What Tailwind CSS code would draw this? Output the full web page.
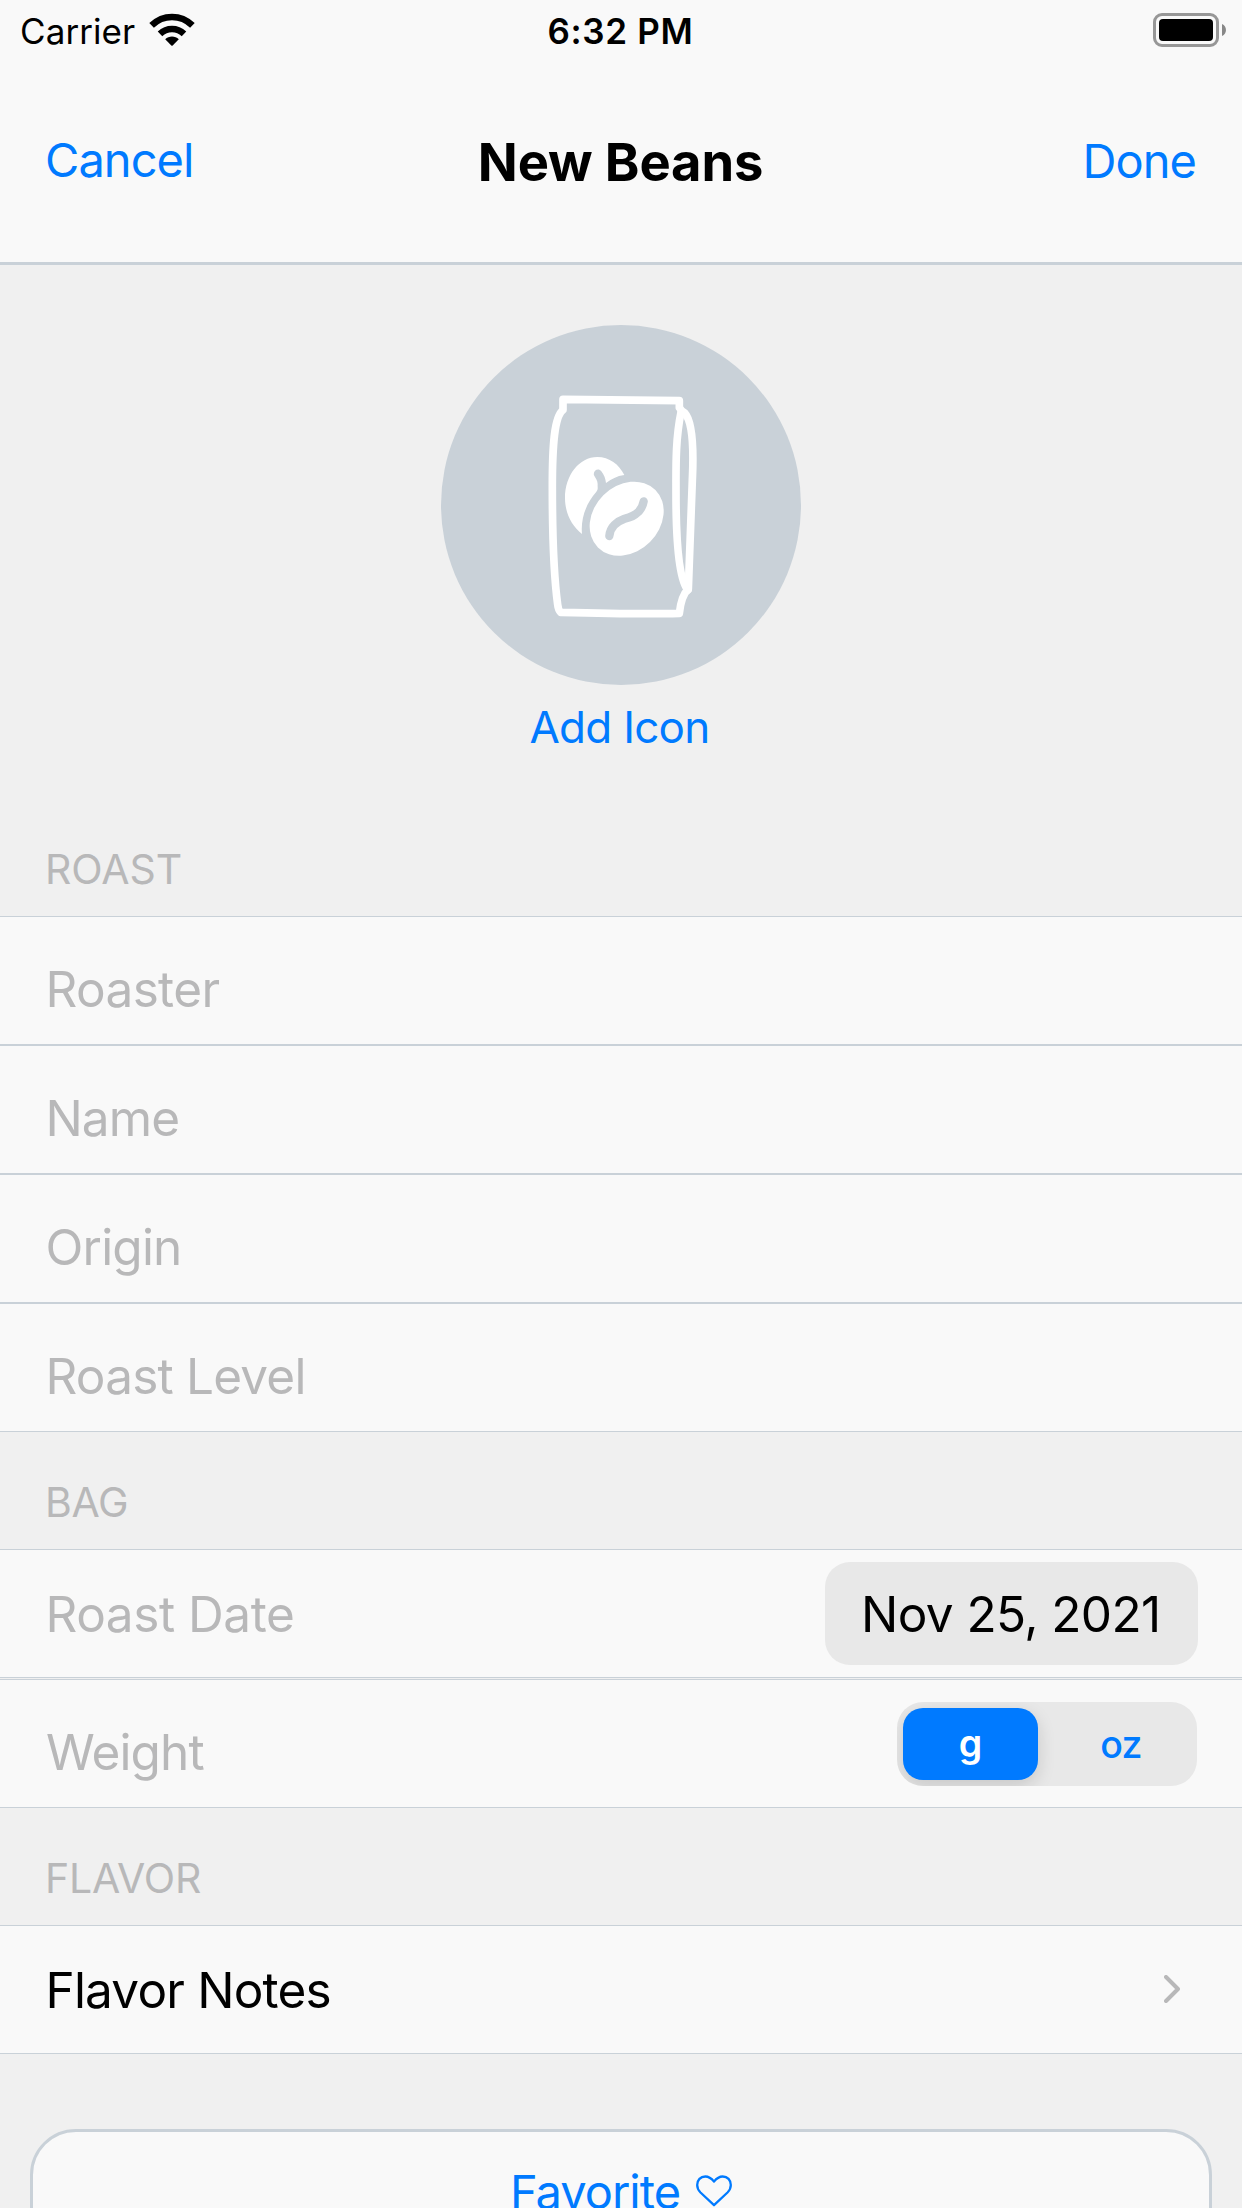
<!DOCTYPE html>
<html lang="en">
<head>
<meta charset="utf-8">
<title>New Beans</title>
<script src="https://cdn.jsdelivr.net/npm/@tailwindcss/browser@4"></script>
</head>
<body class="h-[2208px] w-[1242px] overflow-hidden bg-[#f0f0f0] font-['Inter',sans-serif] text-black">
<div class="flex h-[2208px] flex-col overflow-hidden *:shrink-0">

  <header class="border-b-[3px] border-[#c9d1d8] bg-[#f9f9f9]">
    <div class="grid h-[62px] grid-cols-[1fr_auto_1fr] items-center pr-4 pl-5 text-[35px] leading-none">
      <div class="flex items-center">
        <span class="w-[129px] tracking-[0.08px]">Carrier</span>
        <svg class="-mt-[3px] h-[34px] w-[46px]" viewBox="0 0 46 34" fill="none">
          <g stroke="#000" stroke-width="6.6">
            <path d="M2.6 12.4C14.2 1.2 31.800 1.200 43.400 12.400"/>
            <path d="M11 20.800C17.800 14.400 28.200 14.400 35 20.800"/>
          </g>
          <path d="M16.200 26.300C19.800 22.500 26.200 22.500 29.800 26.300L23.700 32.500Q23 33.100 22.300 32.500Z" fill="#000"/>
        </svg>
      </div>
      <span class="pr-[5px] font-semibold tracking-[0.7px]">6:32 PM</span>
      <svg class="-mt-[2px] h-[34px] w-[73px] justify-self-end" viewBox="0 0 73 34">
        <rect x="1.500" y="1.500" width="63" height="31" rx="7.500" fill="none" stroke="#979797" stroke-width="3"/>
        <rect x="6" y="6" width="54" height="22" rx="4" fill="#000"/>
        <path d="M69 11C74.300 13 74.300 21 69 23Z" fill="#888"/>
      </svg>
    </div>
    <div class="grid h-[200px] grid-cols-[1fr_auto_1fr] items-center pr-[46px] pb-[2px] pl-[45px] leading-none">
      <a class="pb-[3px] text-[47px] tracking-[-0.95px] text-[#007aff]">Cancel</a>
      <h1 class="pt-[2px] text-[52.5px] font-bold tracking-[-0.15px]">New Beans</h1>
      <a class="justify-self-end pb-[2px] text-[47px] tracking-[-0.96px] text-[#007aff]">Done</a>
    </div>
  </header>

  <section class="flex h-[534px] flex-col items-center pt-[60px]">
    <div class="size-[360px] rounded-full bg-[#c9d1d8] pt-[55px] pl-[99px]">
      <svg class="h-[240px] w-[180px]" viewBox="0 0 540 720" fill="none">
        <!-- bag outline and side gusset -->
        <g stroke="#fff" stroke-width="23" stroke-linecap="round" stroke-linejoin="round">
          <path d="M69 58L418 62L418 83Q424 94 434 99C467 134 458 270 457 300L445 627Q424 646 418 700Q300 703 62 697Q55 691 53 674C39 570 37 460 37 320C37 200 42 110 69 90Z"/>
          <path d="M423 97C406 180 408 260 408 340C408 480 416 600 444 630"/>
        </g>
        <!-- back bean -->
        <path fill="#fff" d="M253 285Q236 287 223 294Q209 300 198 309C197 297 192 284 184 274C175 262 158 272 162 286C166 294 173 301 173 312C172 323 176 327 168 337C143 365 121 410 126 462C95 438 75 398 75 355C75 285 118 231 172 231C208 231 237 253 253 285Z"/>
        <!-- front bean -->
        <ellipse cx="260" cy="416" rx="122" ry="99" transform="rotate(-45 260 416)" fill="#fff"/>
        <path d="M208 468C210 440 232 424 252 417C272 411 283 408 296 395C304 386 309 376 311 364" stroke="#c9d1d8" stroke-width="25" stroke-linecap="round"/>
      </svg>
    </div>
    <a class="pt-[20px] pr-[3px] text-[44px] leading-none tracking-[-0.75px] text-[#007aff]">Add Icon</a>
  </section>

  <h2 class="flex h-[117px] items-center pt-[23px] pl-[45px] text-[41px] leading-none tracking-[-0.06px] text-[#b8b8b9]">ROAST</h2>
  <section class="divide-y-2 divide-[#c9d1d8] border-y border-[#c9d1d8] bg-[#f9f9f9] text-[49.5px] leading-none text-[#b8b8b9]">
    <div class="box-content flex h-[108px] items-center pt-[19px] pl-[45.5px] tracking-[-0.65px]">Roaster</div>
    <div class="box-content flex h-[108px] items-center pt-[19px] pl-[45.5px] tracking-[-0.92px]">Name</div>
    <div class="box-content flex h-[108px] items-center pt-[19px] pl-[45.5px] tracking-[-0.8px]">Origin</div>
    <div class="box-content flex h-[108px] items-center pt-[19px] pl-[45.5px] tracking-[-0.8px]">Roast Level</div>
  </section>

  <h2 class="flex h-[117px] items-center pt-[23px] pl-[45px] text-[41px] leading-none tracking-[-0.36px] text-[#b8b8b9]">BAG</h2>
  <section class="flex flex-col gap-px text-[49.5px] leading-none">
    <div class="flex h-[129px] items-center justify-between border-y border-[#c9d1d8] bg-[#f9f9f9] pr-[44px] pl-[45.5px]">
      <span class="pt-[2px] tracking-[-0.46px] text-[#b8b8b9]">Roast Date</span>
      <span class="flex h-[103px] w-[373px] items-center rounded-[25px] bg-[#e8e8e8] pt-[2px] pl-[36px] tracking-[-0.59px]">Nov 25, 2021</span>
    </div>
    <div class="flex h-[129px] items-center justify-between border-y border-[#c9d1d8] bg-[#f9f9f9] pr-[45px] pl-[46px]">
      <span class="pt-[19px] tracking-[-0.85px] text-[#b8b8b9]">Weight</span>
      <div class="flex h-[84px] w-[300px] items-center overflow-hidden rounded-[26px] bg-[#e8e8e8] pl-[6px] text-[37.5px] text-[#007aff]">
        <span class="flex h-[72px] w-[135px] items-center justify-center rounded-[20px] bg-[#007aff] pt-[1px] font-semibold text-white shadow-[0_6px_18px_rgba(0,0,0,0.14)]">g</span>
        <span class="ml-[7px] flex-1 pt-[2px] text-center font-medium tracking-[-0.73px]">oz</span>
      </div>
    </div>
  </section>

  <h2 class="flex h-[117px] items-center pt-[23px] pl-[45px] text-[41px] leading-none tracking-[-0.25px] text-[#b8b8b9]">FLAVOR</h2>
  <section class="flex h-[129px] items-center justify-between border-y border-[#c9d1d8] bg-[#f9f9f9] pr-[62px] pl-[45.5px] text-[49.5px] leading-none">
    <span class="pt-[2px] tracking-[-0.81px]">Flavor Notes</span>
    <svg class="mb-[1px] h-[28px] w-[16px]" viewBox="0 0 16 28" fill="none" stroke="#b8b8b9" stroke-width="4" stroke-linecap="round" stroke-linejoin="round"><path d="M2 2L14 14L2 26"/></svg>
  </section>

  <button class="mx-[30px] mt-[75px] flex h-[124px] items-center justify-center gap-[16px] rounded-[46px] border-[3px] border-[#c9d1d8] bg-[#f9f9f9] text-[47px] leading-none text-[#007aff]">
    <span class="tracking-[-1px]">Favorite</span>
    <svg class="h-[32px] w-[36px]" viewBox="0 0 36 32" fill="none" stroke="#007aff" stroke-width="2.300" stroke-linejoin="round"><path d="M18 30.200L4.500 17.500C2.300 15.300 1.200 13 1.200 10C1.200 5 4.500 1.500 9.300 1.500C12.500 1.500 15.300 3.200 18 6.600C20.700 3.200 23.500 1.500 26.700 1.500C31.500 1.500 34.800 5 34.800 10C34.800 13 33.700 15.300 31.500 17.500Z"/></svg>
  </button>
</div>
</body>
</html>
